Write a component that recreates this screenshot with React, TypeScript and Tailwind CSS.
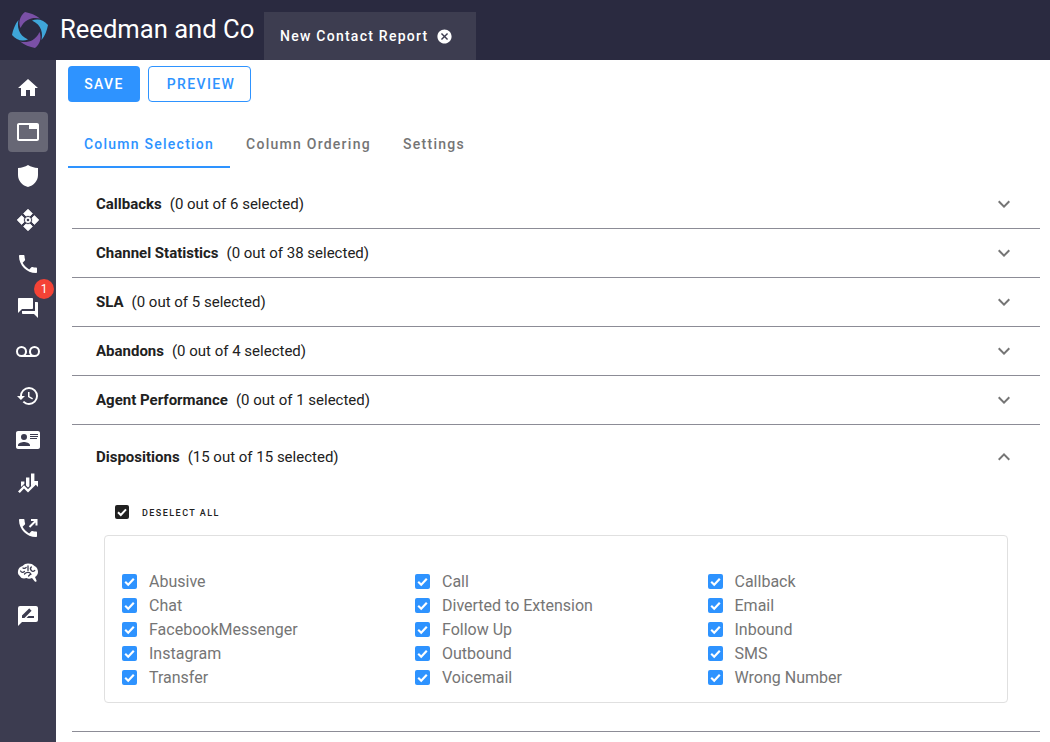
import React from 'react';
import {
  MdHome,
  MdTab,
  MdPhone,
  MdForum,
  MdHistory,
  MdCancel,
  MdKeyboardArrowDown,
  MdKeyboardArrowUp,
} from 'react-icons/md';

const Svg = ({ d, children }: { d?: string; children?: React.ReactNode }) => (
  <svg viewBox="0 0 24 24" className="w-6 h-6 fill-current" fillRule="evenodd">
    {d && <path d={d} />}
    {children}
  </svg>
);

const ShieldIcon = () => (
  <Svg d="M12 1C15 2.8 18 3.8 22 4V11C22 17 17.5 21.7 12 23 6.5 21.7 2 17 2 11V4C6 3.8 9 2.8 12 1Z" />
);

const NodesIcon = () => (
  <Svg>
    <g className="stroke-current" strokeWidth={0.8} strokeLinejoin="round">
      <path d="M12 1.2 16.4 5.6 14 8A4.6 4.6 0 0 0 10 8L7.6 5.6Z" />
      <path d="M12 22.8 16.4 18.4 14 16A4.6 4.6 0 0 1 10 16L7.6 18.4Z" />
      <path d="M1.2 12 5.6 7.6 8 10A4.6 4.6 0 0 0 8 14L5.6 16.4Z" />
      <path d="M22.8 12 18.4 7.6 16 10A4.6 4.6 0 0 1 16 14L18.4 16.4Z" />
    </g>
    <path d="M12 9a3 3 0 1 1 0 6 3 3 0 0 1 0-6Zm0 1.7a1.3 1.3 0 1 0 0 2.6 1.3 1.3 0 0 0 0-2.6Z" />
  </Svg>
);

const VoicemailIcon = () => (
  <Svg d="M18.5 15A3.5 3.5 0 0 1 15 11.5 3.5 3.5 0 0 1 18.5 8 3.5 3.5 0 0 1 22 11.5 3.5 3.5 0 0 1 18.5 15M5.5 15A3.5 3.5 0 0 1 2 11.5 3.5 3.5 0 0 1 5.5 8 3.5 3.5 0 0 1 9 11.5 3.5 3.5 0 0 1 5.5 15M18.5 6A5.5 5.5 0 0 0 13 11.5C13 12.83 13.47 14.05 14.26 15H9.74C10.53 14.05 11 12.83 11 11.5A5.5 5.5 0 0 0 5.5 6 5.5 5.5 0 0 0 0 11.5 5.5 5.5 0 0 0 5.5 17H18.5A5.5 5.5 0 0 0 24 11.5 5.5 5.5 0 0 0 18.5 6Z" />
);

const ContactCardIcon = () => (
  <Svg d="M2 3H22C23.05 3 24 3.95 24 5V19C24 20.05 23.05 21 22 21H2C.95 21 0 20.05 0 19V5C0 3.95.95 3 2 3M14 6V7H22V6H14M14 8V9H21.5L22 9V8H14M14 10V11H21V10H14M8 13.91C6 13.91 2 15 2 17V18H14V17C14 15 10 13.91 8 13.91M8 6A3 3 0 0 0 5 9A3 3 0 0 0 8 12A3 3 0 0 0 11 9A3 3 0 0 0 8 6Z" />
);

const ChartIcon = () => (
  <Svg>
    <path d="M15 1.5h3.4v9.7l-3.4 3.4ZM10 5.5h3.4v8.7l-1.4 1.4-2-2ZM5 9.5h3.4v2.2l-3.4 3.4Z" />
    <path d="M2 19.5 8 13.2l4 4 6.2-6.2L16 9h6v6l-2.2-2.2L12 20.6l-4-4-4.2 4.4Z" />
  </Svg>
);

const PhoneOutIcon = () => (
  <Svg d="M6.6 10.8c1.4 2.8 3.8 5.1 6.6 6.6l2.2-2.2c.3-.3.7-.4 1-.2 1.1.4 2.3.6 3.6.6.6 0 1 .4 1 1V20c0 .6-.4 1-1 1C10.6 21 3 13.4 3 4c0-.6.5-1 1-1h3.5c.6 0 1 .4 1 1 0 1.3.2 2.5.6 3.6.1.3 0 .7-.2 1ZM15 3h6.5v6.5h-2V6.4l-5.3 5.3-1.4-1.4L18.1 5H15Z" />
);

const BrainIcon = () => (
  <Svg>
    <path d="M12 3.5C15 3.5 17 4.3 18.5 6 21 7 22 9.5 22 12 22 14.5 20.5 16 19 17L20.5 20.5C20.8 21.5 19.8 22.3 18.8 21.5L16 18C14 19 12 19 10.5 18 8 19 5 18.5 3.8 16 2.3 15 1.6 13 2 11 2.3 8.5 4 6.5 6.5 6 8 4.3 10 3.5 12 3.5Z" />
    <path
      d="M4.6 11c1 1.7 2.6 1.7 3.8.5M7 8c1 .6 2.2.5 3.2-.6M12 6v4.6M8.5 14c1-1.2 2.2-1.6 3.5-1.6s2.3.5 3 1.8M15.3 7c-1 1-1 2.5 0 3.5s2.3 1 3.4 0M12.6 16l2-2"
      className="stroke-[#3c3c50]"
      fill="none"
      strokeWidth={1.3}
      strokeLinecap="round"
    />
  </Svg>
);

const MessageDrawIcon = () => (
  <Svg d="M18 14H10.5L12.5 12H18M6 14V11.5L12.88 4.64C13.07 4.45 13.39 4.45 13.59 4.64L15.35 6.41C15.55 6.61 15.55 6.92 15.35 7.12L8.47 14M20 2H4A2 2 0 0 0 2 4V22L6 18H20A2 2 0 0 0 22 16V4C22 2.89 21.1 2 20 2Z" />
);

const navItems: { icon: React.ReactNode; active?: boolean; badge?: string }[] = [
  { icon: <MdHome size={24} /> },
  { icon: <MdTab size={24} />, active: true },
  { icon: <ShieldIcon /> },
  { icon: <NodesIcon /> },
  { icon: <MdPhone size={24} /> },
  { icon: <MdForum size={24} />, badge: '1' },
  { icon: <VoicemailIcon /> },
  { icon: <MdHistory size={24} /> },
  { icon: <ContactCardIcon /> },
  { icon: <ChartIcon /> },
  { icon: <PhoneOutIcon /> },
  { icon: <BrainIcon /> },
  { icon: <MessageDrawIcon /> },
];

const collapsed = [
  { title: 'Callbacks', count: '(0 out of 6 selected)' },
  { title: 'Channel Statistics', count: '(0 out of 38 selected)' },
  { title: 'SLA', count: '(0 out of 5 selected)' },
  { title: 'Abandons', count: '(0 out of 4 selected)' },
  { title: 'Agent Performance', count: '(0 out of 1 selected)' },
];

const dispositions = [
  'Abusive', 'Call', 'Callback',
  'Chat', 'Diverted to Extension', 'Email',
  'FacebookMessenger', 'Follow Up', 'Inbound',
  'Instagram', 'Outbound', 'SMS',
  'Transfer', 'Voicemail', 'Wrong Number',
];

function Logo() {
  const petal = 'M-9.5-2C-12-8-10-14-5-18 0-17 6-15 10-11.5 4-13-5-12-9.5-2Z';
  return (
    <svg viewBox="-18 -18 36 36" className="w-9 h-9 shrink-0">
      <path d={petal} fill="#7a50a6" />
      <path d={petal} fill="#3fa6d9" transform="rotate(90)" />
      <path d={petal} fill="#7a50a6" transform="rotate(180)" />
      <path d={petal} fill="#3fa6d9" transform="rotate(270)" />
    </svg>
  );
}

const CheckMark = () => (
  <svg viewBox="0 0 14 14" className="w-full h-full" fill="none" stroke="#ffffff" strokeWidth={2}>
    <path d="M3 7.2 5.8 10 11 4.4" />
  </svg>
);

function DarkTick() {
  return (
    <span className="block w-3.5 h-3.5 rounded-[2px] bg-[#212121] shrink-0">
      <CheckMark />
    </span>
  );
}

function BlueTick() {
  return (
    <span className="block w-[15px] h-[15px] mb-px rounded-[2px] bg-[#2e93ff] shrink-0">
      <CheckMark />
    </span>
  );
}

export default function App() {
  return (
    <div className="h-[742px] overflow-hidden flex flex-col bg-white font-['Roboto',sans-serif]">
      <header className="h-[60px] shrink-0 bg-[#2a2a40] flex items-end">
        <div className="self-center flex items-center pl-3 w-[264px]">
          <Logo />
          <span className="ml-3 pb-px text-[25.6px] leading-none text-white whitespace-nowrap">Reedman and Co</span>
        </div>
        <div className="h-12 w-[212px] bg-[#3d3d50] flex items-center pl-4 text-white">
          <span className="text-sm font-medium tracking-[1.25px] whitespace-nowrap">New Contact Report</span>
          <MdCancel size={17} className="ml-2" />
        </div>
      </header>

      <div className="flex flex-1 min-h-0">
        <nav className="w-14 shrink-0 bg-[#3c3c50] flex flex-col items-center pt-1.5 text-white">
          {navItems.map((item, i) => (
            <div key={i} className="relative h-11 flex items-center justify-center">
              <div className={`w-10 h-10 flex items-center justify-center rounded ${item.active ? 'bg-[#676775]' : ''}`}>
                {item.icon}
              </div>
              {item.badge && (
                <span className="absolute -top-[7px] left-[26px] w-5 h-5 rounded-full bg-[#f44336] text-white text-xs flex items-center justify-center">
                  {item.badge}
                </span>
              )}
            </div>
          ))}
        </nav>

        <main className="flex-1 min-w-0 pt-1.5 pl-3 pr-2.5">
          <div className="flex gap-2">
            <button className="h-9 w-[72px] rounded bg-[#2e93ff] text-white text-sm font-medium tracking-[1.4px]">
              SAVE
            </button>
            <button className="h-9 w-[103px] rounded border border-[#2e93ff] text-[#2e93ff] text-sm font-medium tracking-[1.4px] pl-[3px]">
              PREVIEW
            </button>
          </div>

          <div className="flex mt-[18px] h-12">
            <div className="w-[162px] pt-0.5 flex items-center justify-center text-sm font-medium tracking-[1.25px] text-[#2e93ff] border-b-2 border-[#2e93ff]">
              Column Selection
            </div>
            <div className="w-[157px] flex items-center justify-center text-sm font-medium tracking-[1.25px] text-[#757575]">
              Column Ordering
            </div>
            <div className="w-[93px] pl-px flex items-center justify-center text-sm font-medium tracking-[1.25px] text-[#757575]">
              Settings
            </div>
          </div>

          <div className="mt-3 ml-1">
            {collapsed.map((p) => (
              <div key={p.title} className="h-[49px] border-b border-[#8c8c96] flex items-center pl-6 pr-6 text-[15px] text-[#212121]">
                <b className="font-bold">{p.title}</b>
                <span className="ml-2">{p.count}</span>
                <MdKeyboardArrowDown size={24} className="ml-auto text-[#757575]" />
              </div>
            ))}

            <div className="border-b border-[#8c8c96] h-[307px]">
              <div className="h-16 flex items-center pl-6 pr-6 text-[15px] text-[#212121]">
                <b className="font-bold">Dispositions</b>
                <span className="ml-2">(15 out of 15 selected)</span>
                <MdKeyboardArrowUp size={24} className="ml-auto text-[#757575]" />
              </div>
              <div className="ml-[43px] mt-[16px] flex items-center h-3.5">
                <DarkTick />
                <span className="ml-[13px] pt-[3px] text-[9px] font-medium tracking-[1.45px] text-[#212121]">DESELECT ALL</span>
              </div>
              <div className="ml-8 mr-8 mt-4 h-[168px] border border-[#e0e0e0] rounded pt-[34px] pl-[17px]">
                <div className="grid grid-cols-[293px_292.5px_1fr]">
                  {dispositions.map((d) => (
                    <label key={d} className="h-6 flex items-center gap-3 text-base text-[#757575]">
                      <BlueTick />
                      {d}
                    </label>
                  ))}
                </div>
              </div>
            </div>
          </div>
        </main>
      </div>
    </div>
  );
}
